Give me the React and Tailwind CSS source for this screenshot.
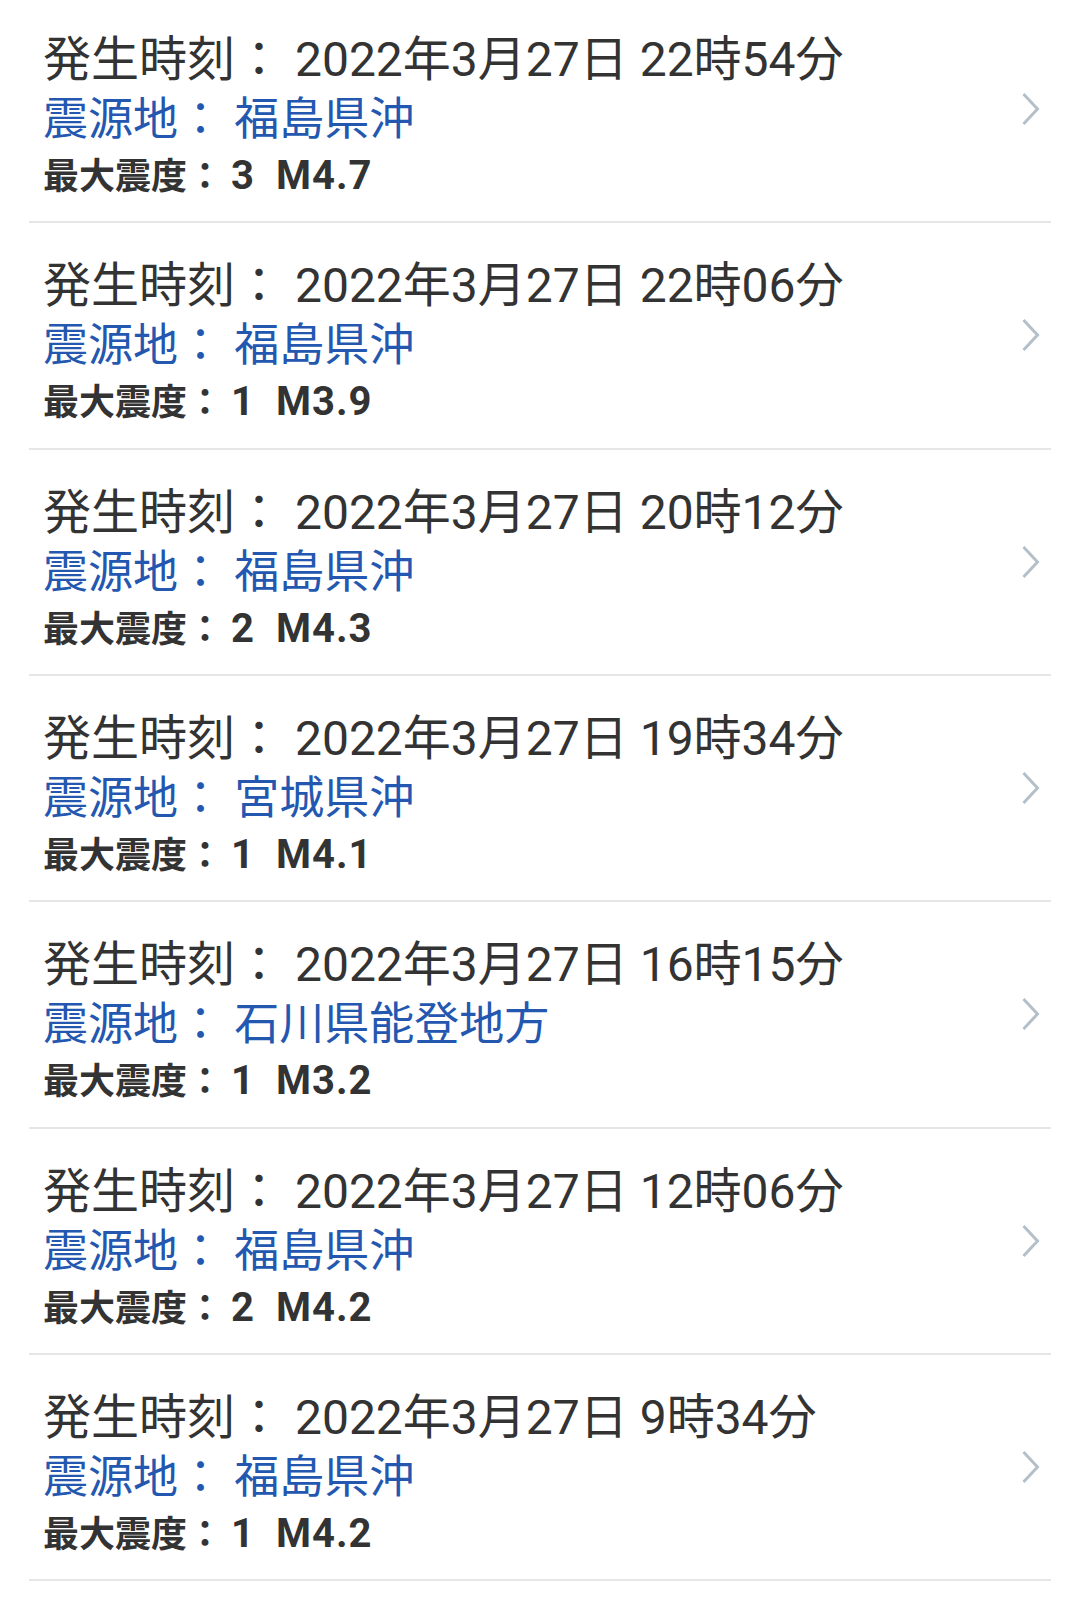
import React from "react";

const items = [
  { t: "2022年3月27日 22時54分", p: "福島県沖", i: "3", m: "M4.7" },
  { t: "2022年3月27日 22時06分", p: "福島県沖", i: "1", m: "M3.9" },
  { t: "2022年3月27日 20時12分", p: "福島県沖", i: "2", m: "M4.3" },
  { t: "2022年3月27日 19時34分", p: "宮城県沖", i: "1", m: "M4.1" },
  { t: "2022年3月27日 16時15分", p: "石川県能登地方", i: "1", m: "M3.2" },
  { t: "2022年3月27日 12時06分", p: "福島県沖", i: "2", m: "M4.2" },
  { t: "2022年3月27日 9時34分", p: "福島県沖", i: "1", m: "M4.2" },
];

function Chevron() {
  return (
    <svg width="20" height="34" viewBox="0 0 20 34" fill="none">
      <path d="M2.5 2 L16.5 17 L2.5 32" stroke="#b3c0ca" strokeWidth="3" strokeLinecap="butt" strokeLinejoin="miter" />
    </svg>
  );
}

export default function App() {
  return (
    <div
      className="w-[1080px] min-h-[1609px] bg-white overflow-hidden"
      style={{ fontFamily: "Roboto, 'Noto Sans CJK JP', sans-serif" }}
    >
      <div className="mt-[-3px]">
        {items.map((it, idx) => (
          <div
            key={idx}
            className="mx-[29px] h-[226.33px] border-b-2 border-[#e6e6e6] flex items-center justify-between pl-[14px] pr-[10px]"
          >
            <div className="flex flex-col self-start pt-[34px]">
              <div className="text-[48px] leading-[58px] text-[#333333] whitespace-nowrap">
                発生時刻： {it.t}
              </div>
              <div className="text-[45px] leading-[62px] text-[#2458b0] whitespace-nowrap">
                震源地： {it.p}
              </div>
              <div className="text-[36px] leading-[50px] font-bold text-[#333333] whitespace-nowrap">
                最大震度：
                <span className="text-[40px] ml-[8px]">{it.i}</span>
                <span className="text-[40px] ml-[22px] tracking-[1px]">{it.m}</span>
              </div>
            </div>
            <Chevron />
          </div>
        ))}
      </div>
    </div>
  );
}
